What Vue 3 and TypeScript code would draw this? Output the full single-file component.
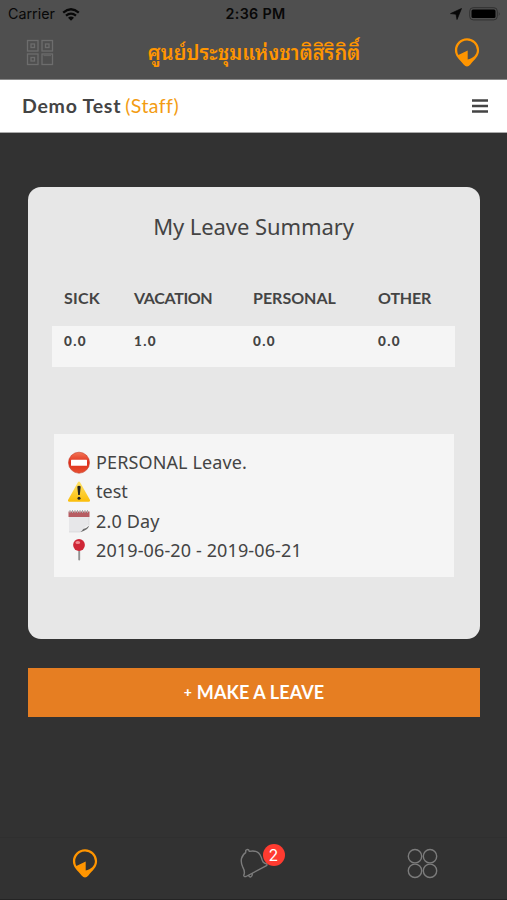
<script setup lang="ts">
interface LeaveBalance {
  label: string
  value: string
}

const balances: LeaveBalance[] = [
  { label: 'SICK', value: '0.0' },
  { label: 'VACATION', value: '1.0' },
  { label: 'PERSONAL', value: '0.0' },
  { label: 'OTHER', value: '0.0' },
]

const pendingCount: number = 2
</script>

<template>
  <div class="screen">
    <header class="top">
      <div class="status">
        <div class="carrier">
          <span>Carrier</span>
          <svg width="18" height="13" viewBox="0 0 18 13" fill="none" stroke="#080808">
            <path d="M1.2 4.6Q9-2 16.8 4.6" stroke-width="2.3" />
            <path d="M4 7.7Q9 3.5 14 7.7" stroke-width="2.2" />
            <path d="M6 9.8Q9 7.3 12 9.8L9 12.8Z" fill="#080808" stroke="none" />
          </svg>
        </div>
        <div class="time">2:36 PM</div>
        <div class="power">
          <svg width="12" height="12" viewBox="0 0 12 12"><path d="M11.5.5 7 11.5 6 6.2.5 5.6Z" fill="#080808" stroke="#080808" stroke-width=".7" /></svg>
          <svg width="32" height="14" viewBox="0 0 32 14">
            <rect x=".7" y=".7" width="27.6" height="12.2" rx="3.5" fill="none" stroke="#303030" />
            <rect x="2.5" y="2.5" width="24" height="8.6" rx="1.5" fill="#000" />
            <path d="M29.8 4.7q1.8 2.1 0 4.2Z" fill="#303030" />
          </svg>
        </div>
      </div>
      <div class="nav">
        <svg class="qr" width="28" height="27" viewBox="0 0 28 27" fill="none" stroke="#6d6d6d" stroke-width="1.3">
          <rect x="1.5" y="1.5" width="10.5" height="10.5" /><rect x="16" y="1.5" width="10.5" height="10.5" />
          <rect x="1.5" y="15" width="10.5" height="10.5" /><rect x="16" y="15" width="10.5" height="10.5" />
          <rect x="5" y="5" width="3.5" height="3.5" /><rect x="19.5" y="5" width="3.5" height="3.5" />
          <rect x="5" y="18.5" width="3.5" height="3.5" />
          <path d="M17.5 16.6h7.5" stroke-width=".8" />
        </svg>
        <h1><span>ศูนย์ประชุมแห่งชาติสิริกิติ์</span></h1>
        <svg class="pin" width="26" height="31" viewBox="0 0 26 31">
          <path d="M13 1.2C6.3 1.2.9 6.4.9 13.1c0 6.2 4.4 9.1 8.7 14.3Q13 31.6 16.4 27.4c4.3-5.2 8.7-8.1 8.7-14.3C25.1 6.4 19.7 1.2 13 1.2Zm0 2.3a9.9 9.9 0 0 1 9.9 9.6c0 4.8-3.9 8.6-9.2 9.3V13.5L4.4 18A9.8 9.8 0 0 1 13 3.5Z" fill="#ff9500" fill-rule="evenodd" />
        </svg>
      </div>
    </header>

    <div class="user">
      <p><b>Demo Test</b><span>(Staff)</span></p>
      <svg width="16" height="14" viewBox="0 0 16 14"><path d="M0 1.5h16M0 7h16M0 12.5h16" stroke="#444" stroke-width="2.5" /></svg>
    </div>

    <main>
      <section class="card">
        <h2>My Leave Summary</h2>
        <div class="balances labels"><span v-for="b in balances" :key="b.label" :class="b.label.toLowerCase()">{{ b.label }}</span></div>
        <div class="balances values"><span v-for="b in balances" :key="b.label">{{ b.value }}</span></div>
        <ul>
          <li>
            <svg width="24" height="24" viewBox="0 0 24 24">
              <defs><linearGradient id="red" x2="0" y2="1"><stop stop-color="#f37555" /><stop offset=".5" stop-color="#df2e1a" /><stop offset="1" stop-color="#e75031" /></linearGradient></defs>
              <circle cx="12" cy="11.7" r="10.5" fill="url(#red)" stroke="#c63a28" stroke-width=".6" />
              <rect x="4" y="8.7" width="16" height="6" rx=".5" fill="#fff" />
            </svg>
            <span class="type">PERSONAL Leave.</span>
          </li>
          <li>
            <svg width="24" height="24" viewBox="0 0 24 24">
              <defs><linearGradient id="yellow" x2="0" y2="1"><stop stop-color="#ffe36a" /><stop offset="1" stop-color="#fbbd08" /></linearGradient></defs>
              <path d="M10.8 2.4q1.2-1.8 2.4 0L23 20q.7 1.8-1.3 1.8H2.3Q.3 21.8 1 20Z" fill="url(#yellow)" />
              <path d="M10.3 6.5q1.7-1.4 3.4 0L12.8 15h-1.6Z" fill="#222" /><circle cx="12" cy="18.2" r="1.5" fill="#222" />
            </svg>
            <span>test</span>
          </li>
          <li>
            <svg width="24" height="24" viewBox="0 0 24 24">
              <path d="M2 2.5h20V16q-5 1-7 7H2Z" fill="#e7e7e9" />
              <path d="M1.5 2.5h21V8h-21Z" fill="#b75c62" />
              <path d="M3 1v3M5.5 1v3M8 1v3M10.5 1v3M13 1v3M15.5 1v3M18 1v3M20.5 1v3" stroke="#aaa" />
              <path d="M22.3 16.5Q21 21 13 23.2q2.2-1.2 3.3-3.2 3-.5 6-3.5Z" fill="#6c6c6c" />
              <path d="M22 8v8M13 23H2" stroke="#d2d2d5" fill="none" stroke-width=".6" />
            </svg>
            <span class="days">2.0 Day</span>
          </li>
          <li>
            <svg width="24" height="24" viewBox="0 0 24 24">
              <path d="M12.2 10v11.5" stroke="#929292" stroke-width="1.9" stroke-linecap="round" />
              <circle cx="12" cy="7" r="5.9" fill="#cf2636" /><ellipse cx="10.8" cy="4.5" rx="2.4" ry="1.6" fill="#f18b91" />
            </svg>
            <span class="dates">2019-06-20 - 2019-06-21</span>
          </li>
        </ul>
      </section>
      <button type="button"><i>+</i><span>MAKE A LEAVE</span></button>
    </main>

    <nav class="tabs">
      <div class="tab">
        <svg width="26" height="31" viewBox="0 0 26 31">
          <path d="M13 1.2C6.3 1.2.9 6.4.9 13.1c0 6.2 4.4 9.1 8.7 14.3Q13 31.6 16.4 27.4c4.3-5.2 8.7-8.1 8.7-14.3C25.1 6.4 19.7 1.2 13 1.2Zm0 2.3a9.9 9.9 0 0 1 9.9 9.6c0 4.8-3.9 8.6-9.2 9.3V13.5L4.4 18A9.8 9.8 0 0 1 13 3.5Z" fill="#ff9500" fill-rule="evenodd" />
        </svg>
      </div>
      <div class="tab">
        <div class="bell">
          <svg width="30" height="32" viewBox="0 0 30 32" fill="none" stroke="#7c7c7c" stroke-width="1.4" stroke-linejoin="round">
            <path d="M7 4.4Q6 1.9 8 1.6 9.8 1.3 10.3 3.4C16.5 2 20.7 4.6 22.3 9.4c1.1 4.3 2 5.7 5.2 6.4q1.1.9 0 1.9L7 28.5q-2.2.6-2.3-1.2c1.6-3 .8-5.1-.9-8.2C1 13.3 2 7.4 7 4.4M9.7 27.2c.5 3 4 2.3 3.6-1.9" />
          </svg>
          <span class="badge">{{ pendingCount }}</span>
        </div>
      </div>
      <div class="tab">
        <svg width="31" height="31" viewBox="0 0 31 31" fill="none" stroke="#7c7c7c" stroke-width="1.4">
          <circle cx="8" cy="8.2" r="6.7" /><circle cx="23" cy="8.2" r="6.7" /><circle cx="8" cy="22.8" r="6.7" /><circle cx="23" cy="22.8" r="6.7" />
        </svg>
      </div>
    </nav>
  </div>
</template>

<style>
body { background: #323232; }
</style>

<style scoped>
* { box-sizing: border-box; }
h1, h2, p, ul { margin: 0; padding: 0; }
svg { display: block; flex: none; }
.screen { width: 507px; height: 900px; display: flex; flex-direction: column; background: #323232; font-family: "Open Sans", "Noto Sans", sans-serif; color: #444; overflow: hidden; }
.top { height: 80px; flex: none; background: #4f4f4f; border-bottom: 1px solid #898989; }
.status { height: 27px; display: grid; grid-template-columns: 1fr auto 1fr; align-items: center; padding: 1px 6px 0 8px; font: 14.3px/26px Inter, sans-serif; color: #080808; }
.carrier { display: flex; align-items: center; gap: 7px; }
.time { font-weight: 600; letter-spacing: .3px; padding-left: 2px; }
.power { display: flex; align-items: center; justify-content: flex-end; gap: 7px; }
.nav { height: 52px; display: flex; align-items: center; justify-content: space-between; padding: 0 27px 1px 26px; }
.nav h1 { padding-bottom: 4px; font: 600 20px/30px "Noto Sans Thai Looped", "Noto Looped Thai", "Loma", "Garuda", "Waree", "Umpush", "Tlwg Typo", "Noto Serif Thai", "Noto Sans Thai", sans-serif; color: #ff9500; white-space: nowrap; }
.user { height: 53px; flex: none; display: flex; align-items: center; justify-content: space-between; background: #fff; border-bottom: 1px solid #aaa; padding: 0 19px 0 22px; }
.user p { display: flex; gap: 4px; font: 19.5px/26px Lato, sans-serif; }
.user b { letter-spacing: .75px; }
.user span { color: #f39c12; letter-spacing: .45px; }
main { flex: 1; padding: 54px 27px 0 28px; }
.card { height: 452px; border-radius: 13px; background: #e7e7e7; padding: 21px 25px 0 24px; }
h2 { font: 22px/36px "Noto Sans", sans-serif; letter-spacing: -.08px; text-align: center; }
.balances { display: grid; grid-template-columns: 70px 119px 125px 1fr; padding-left: 12px; font-family: Lato, sans-serif; font-weight: 700; }
.labels { font-size: 16px; line-height: 24px; padding-top: 42px; height: 82px; }
.sick { letter-spacing: .25px; }
.vacation { letter-spacing: -.35px; }
.other { letter-spacing: -.15px; }
.values { height: 41px; background: #f5f5f5; font-size: 13.5px; font-weight: 900; line-height: 31px; letter-spacing: 1.3px; }
ul { list-style: none; height: 143px; margin: 67px 1px 0 2px; padding: 14px 0 0 13px; background: #f5f5f5; font: 18px/29.2px "Noto Sans", sans-serif; }
li { display: flex; align-items: center; height: 29.2px; gap: 5px; }
.type, .dates { letter-spacing: .12px; }
.days { letter-spacing: .15px; padding-top: 1px; }
button { width: 100%; height: 49px; margin-top: 29.4px; border: 0; padding: 0 0 1px; display: flex; align-items: center; justify-content: center; gap: 5px; background: #e67e22; color: #fff; font: bold 18px/24px Lato, sans-serif; }
button i { font-style: normal; font-size: 14px; font-weight: 900; }
button span { letter-spacing: .1px; }
.tabs { height: 63px; flex: none; display: grid; grid-template-columns: repeat(3, 1fr); border-top: 1px solid #2f2f2f; border-bottom: 1px solid #242424; padding-bottom: 10px; }
.tab { display: flex; align-items: center; justify-content: center; }
.bell { position: relative; }
.badge { position: absolute; left: 24px; top: -4px; width: 22px; height: 22px; border-radius: 50%; background: #ff3b30; color: #fff; font: 16px/22px Inter, sans-serif; text-align: center; }
</style>
